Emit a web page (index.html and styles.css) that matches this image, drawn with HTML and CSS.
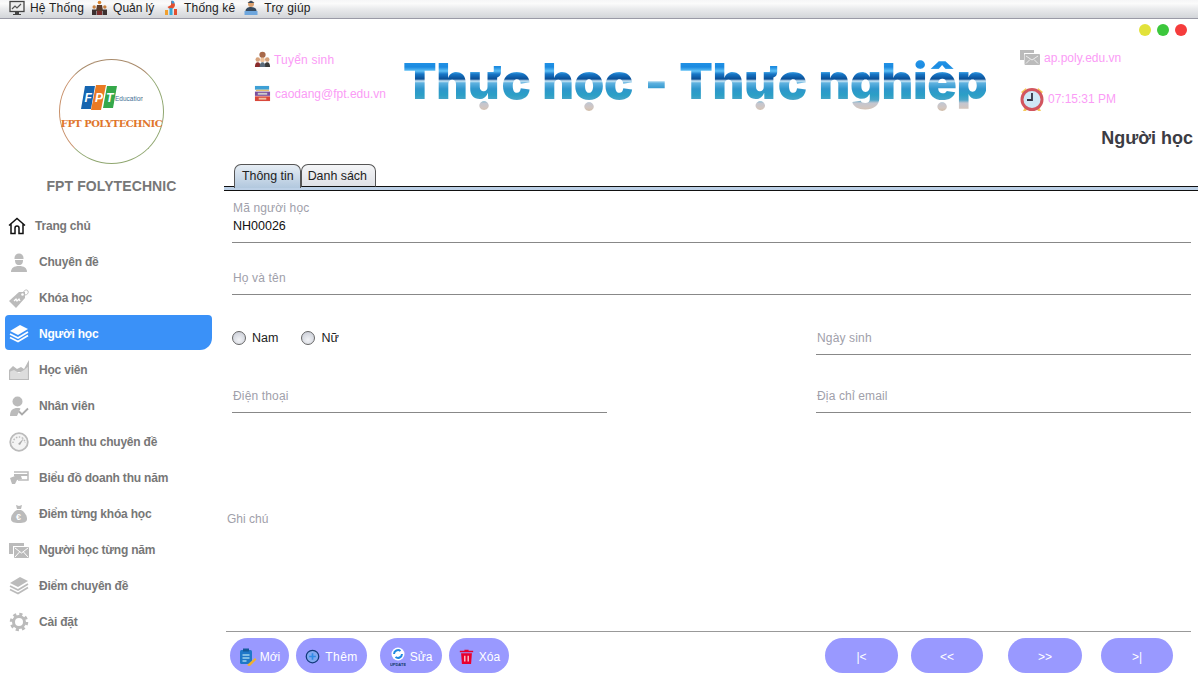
FILE: index.html
```html
<!DOCTYPE html>
<html lang="vi">
<head>
<meta charset="utf-8">
<title>Người học</title>
<link rel="stylesheet" href="styles.css">
</head>
<body>
<header class="menubar">
  <span class="menu-item menu-first">
    <svg class="mi" viewBox="0 0 16 16"><rect x="1" y="1.500" width="14" height="10" fill="#eee" stroke="#444" stroke-width="1.300"/><path d="M3 9l3-3 2 2 4-4" fill="none" stroke="#555" stroke-width="1.200"/><path d="M6 12h4v2h2v1H4v-1h2z" fill="#444"/></svg>
    Hệ Thống</span>
  <span class="menu-item menu-narrow">
    <svg class="mi mi-wide" viewBox="0 0 17 16"><circle cx="8.500" cy="2.500" r="1.800" fill="#d9822b"/><path d="M6 5h5l1 6H5z" fill="#5a3a2a"/><circle cx="3.200" cy="7" r="1.700" fill="#c9803f"/><path d="M1 9.500h4.500V15H1z" fill="#3c3030"/><circle cx="13.800" cy="7" r="1.700" fill="#c9803f"/><path d="M11.500 9.500H16V15h-4.500z" fill="#3c3030"/><path d="M6 11h5v4H6z" fill="#7a2b2b"/></svg>
    Quản lý</span>
  <span class="menu-item menu-third">
    <svg class="mi" viewBox="0 0 16 16"><path d="M8 1a4 4 0 1 1-3.500 6L8 5z" fill="#e2502f"/><path d="M8.500 0.500a3 3 0 0 1 3 3h-3z" fill="#3d9bd9"/><rect x="2" y="10" width="3" height="5" fill="#f0a030"/><rect x="6.500" y="8" width="3" height="7" fill="#38a9d6"/><rect x="11" y="9" width="3" height="6" fill="#e2502f"/></svg>
    Thống kê</span>
  <span class="menu-item">
    <svg class="mi" viewBox="0 0 16 16"><circle cx="8" cy="4" r="3" fill="#d9a06f"/><path d="M4.500 3l3.500-2.500L11.500 3z" fill="#34495e"/><path d="M2.500 11c0-2.500 2.500-4 5.500-4s5.500 1.500 5.500 4z" fill="#34495e"/><rect x="1.500" y="11" width="13" height="4" fill="#6ea6dd"/></svg>
    Trợ giúp</span>
</header>

<div class="window">
  <div class="dots" aria-hidden="true"><i class="dot dot-y"></i><i class="dot dot-g"></i><i class="dot dot-r"></i></div>

  <aside class="sidebar">
    <div class="logo">
      <svg class="fpt" viewBox="0 0 62 25">
        <path d="M4 1h10l-4 23H0z" fill="#1565b0"/><path d="M15 0h10l-5 25H10z" fill="#ea7a23"/><path d="M26 1h10l-4 22H22z" fill="#35a84a"/>
        <text x="3.500" y="17" class="fpt-l">F</text><text x="14" y="17" class="fpt-l">P</text><text x="25" y="17" class="fpt-l">T</text>
        <text x="34" y="16" class="fpt-e">Education</text>
      </svg>
      <span class="logo-text">FPT POLYTECHNIC</span>
    </div>
    <div class="brand">FPT FOLYTECHNIC</div>
    <nav class="nav">
      <a class="nav-item nav-home"><svg class="home" viewBox="0 0 18 18"><path d="M1 8.500L9 1.500l8 7M3 7v9.500h4V11a2 2 0 0 1 4 0v5.500h4V7" fill="none" stroke="#111" stroke-width="1.500"/></svg>Trang chủ</a>
      <a class="nav-item"><svg class="ni" viewBox="0 0 20 20"><path d="M5.500 6a4.500 4.500 0 0 1 9 0v1h-9z" fill="#bbb"/><path d="M6 8h8c0 3-1 5-4 5s-4-2-4-5z" fill="#bbb"/><path d="M2 20c0-4 3-6 8-6s8 2 8 6z" fill="#bbb"/></svg>Chuyên đề</a>
      <a class="nav-item"><svg class="ni" viewBox="0 0 20 20"><path d="M0 13L10 4h6v6L7 20z" fill="#bbb"/><circle cx="13.500" cy="6.500" r="1.300" fill="#fff"/><path d="M14 5c1-3 4-4 5-2s-1 4-3 4" fill="none" stroke="#bbb"/><path d="M5 13l2-2 1 2 2-2 1 2" fill="none" stroke="#fff" stroke-width="1.200"/></svg>Khóa học</a>
      <a class="nav-item nav-active"><svg class="ni" viewBox="0 0 20 20"><path d="M1 7l10-6 8 4-10 6z" fill="#fff"/><path d="M1 10l8 4 10-6M1 13.500l8 4 10-6" fill="none" stroke="#fff" stroke-width="1.800"/></svg>Người học</a>
      <a class="nav-item"><svg class="ni" viewBox="0 0 20 20"><path d="M0 10L4 6l4 3 4-2 3 2 5-9v12H0z" fill="#bbb"/><path d="M0 12l5-2 5 3 5-3 5-4v13H0z" fill="#ddd"/><path d="M0 19.500h20M.5 10v9M19.500 2v17" stroke="#bbb" stroke-width="1.200"/></svg>Học viên</a>
      <a class="nav-item"><svg class="ni" viewBox="0 0 20 20"><circle cx="8.500" cy="5.500" r="5" fill="#bbb"/><path d="M1 20c0-6 3-8 7.500-8 1 0 2 .1 3 .5L8 20z" fill="#bbb"/><path d="M10 15.500l3 3 6-6" fill="none" stroke="#aaa" stroke-width="1.800"/></svg>Nhân viên</a>
      <a class="nav-item"><svg class="ni" viewBox="0 0 20 20"><circle cx="10" cy="10" r="8.800" fill="#f4f4f4" stroke="#bbb" stroke-width="1.800"/><path d="M4 11a6 6 0 0 1 12 0" fill="none" stroke="#bbb" stroke-dasharray="1.500 1.500" stroke-width="1.500"/><path d="M9 12l6-6-4 7z" fill="#aaa"/></svg>Doanh thu chuyên đề</a>
      <a class="nav-item"><svg class="ni" viewBox="0 0 20 20"><path d="M5 4h14v8H9" fill="none" stroke="#bbb" stroke-width="1.500"/><path d="M5 7h14" stroke="#bbb" stroke-width="2"/><path d="M1 10l5-2h6l1 3-5 1-2 4H3z" fill="#bbb"/></svg>Biểu đồ doanh thu năm</a>
      <a class="nav-item"><svg class="ni" viewBox="0 0 20 20"><path d="M7 1l3 1 3-1-1 4H8z" fill="#bbb"/><path d="M8 6h4c4 2 6 6 6 9 0 3-3 4-8 4s-8-1-8-4c0-3 2-7 6-9z" fill="#bbb"/><text x="7" y="16" class="euro">€</text></svg>Điểm từng khóa học</a>
      <a class="nav-item"><svg class="ni" viewBox="0 0 20 20"><path d="M0 3h15v3H4v8H0z" fill="#bbb"/><rect x="5" y="7" width="15" height="11" rx="1" fill="#bbb"/><path d="M6 8l6.500 5L19 8M6 17l4.500-5M19 17l-4.500-5" fill="none" stroke="#fff"/></svg>Người học từng năm</a>
      <a class="nav-item"><svg class="ni" viewBox="0 0 20 20"><path d="M1 7l10-6 8 4-10 6z" fill="#bbb"/><path d="M1 10l8 4 10-6M1 13.500l8 4 10-6" fill="none" stroke="#bbb" stroke-width="1.800"/></svg>Điểm chuyên đề</a>
      <a class="nav-item"><svg class="ni" viewBox="0 0 20 20"><circle cx="10" cy="10" r="5.500" fill="none" stroke="#bbb" stroke-width="3"/><circle cx="10" cy="10" r="7.500" fill="none" stroke="#bbb" stroke-width="3.500" stroke-dasharray="3 2.900"/></svg>Cài đặt</a>
    </nav>
  </aside>

  <main class="main">
    <section class="banner">
      <div class="links links-left">
        <span class="link link-tight"><svg class="li" viewBox="0 0 18 18"><circle cx="9" cy="4" r="3.300" fill="#a8694a"/><circle cx="4" cy="9" r="2.400" fill="#d6a27c"/><circle cx="14" cy="9" r="2.400" fill="#d6a27c"/><circle cx="9" cy="9.500" r="2.500" fill="#eec39c"/><path d="M1 17c0-3 1-5 3-5s3 2 3 5z" fill="#8a2b2b"/><path d="M11 17c0-3 1-5 3-5s3 2 3 5z" fill="#3a3a3a"/><path d="M6 17c0-3 1-5 3-5s3 2 3 5z" fill="#5b6b7b"/></svg>Tuyển sinh</span>
        <span class="link"><svg class="li" viewBox="0 0 18 18"><rect x="1" y="1" width="15" height="4" fill="#3da0d6"/><rect x="2" y="5" width="14" height="1.500" fill="#e8c070"/><rect x="1" y="7" width="16" height="4.500" fill="#7a4f9d"/><rect x="4" y="8.300" width="10" height="2" fill="#ccc"/><rect x="1" y="12" width="16" height="5" fill="#d9483b"/><rect x="5" y="13.500" width="8" height="2" fill="#f0c0a0"/></svg>caodang@fpt.edu.vn</span>
      </div>
      <div class="slogan">Thực học - Thực nghiệp</div>
      <div class="links links-right">
        <span class="link"><svg class="li li-mail" viewBox="0 0 20 17"><path d="M0 1h14v3H4v7H0z" fill="#bbb"/><rect x="4.500" y="5" width="15.500" height="11" rx="1" fill="#bbb"/><path d="M6 7l6 4 6-4M6 14.500l4-4M18 14.500l-4-4" fill="none" stroke="#eee"/></svg>ap.poly.edu.vn</span>
        <span class="link link-clock"><svg class="li li-clock" viewBox="0 0 24 24"><path d="M1 5l5-4 1 3-4 3zM23 5l-5-4-1 3 4 3zM5 20l-2 4h3l2-3zM19 20l2 4h-3l-2-3z" fill="#f5c95a"/><circle cx="12" cy="12.500" r="10" fill="#cfe8f7" stroke="#d2555f" stroke-width="3"/><path d="M12 6v7H7" fill="none" stroke="#334" stroke-width="1.800"/></svg>07:15:31 PM</span>
      </div>
    </section>
    <h1 class="title">Người học</h1>

    <div class="tabs">
      <span class="tab tab-on">Thông tin</span>
      <span class="tab">Danh sách</span>
    </div>

    <form class="form">
      <div class="field field-first span-3"><span class="f-label">Mã người học</span><span class="f-value">NH00026</span></div>
      <div class="field span-3"><span class="f-label">Họ và tên</span></div>
      <div class="radios"><label class="radio"><i class="rb"></i>Nam</label><label class="radio"><i class="rb"></i>Nữ</label></div>
      <div class="field col-3"><span class="f-label">Ngày sinh</span></div>
      <div class="field col-1"><span class="f-label">Điện thoại</span></div>
      <div class="field col-3"><span class="f-label">Địa chỉ email</span></div>
    </form>

    <div class="notes"><span class="f-label">Ghi chú</span></div>

    <footer class="actions">
      <button type="button" class="btn b-moi"><svg class="bi" viewBox="0 0 18 18"><rect x="1" y="2" width="12" height="14" rx="1.500" fill="#1f78c8"/><rect x="4" y="0.500" width="6" height="3" fill="#145a99"/><path d="M3.500 7h7M3.500 10h7M3.500 13h4" stroke="#dff" stroke-width="1.200"/><path d="M8 17l8-7 1.500 1.500-7 7z" fill="#f0b030"/></svg>Mới</button>
      <button type="button" class="btn b-them"><svg class="bi bi-15" viewBox="0 0 18 18"><circle cx="9" cy="9" r="7.500" fill="#7fa8f0" stroke="#123a7a" stroke-width="1.500"/><path d="M5 9h8M9 5v8" stroke="#2f8be8" stroke-width="2"/></svg>Thêm</button>
      <button type="button" class="btn b-sua"><svg class="bi bi-up" viewBox="0 0 16 20"><circle cx="8" cy="7" r="6.500" fill="#fff"/><path d="M4 7a4 4 0 0 1 6.500-3M12 7a4 4 0 0 1-6.500 3" fill="none" stroke="#2089e0" stroke-width="2"/><text x="8" y="18.500" class="up-t">UPDATE</text></svg>Sửa</button>
      <button type="button" class="btn b-xoa"><svg class="bi bi-15" viewBox="0 0 18 18"><path d="M6.500 2V.8h5V2H17v2H1V2z" fill="#e8002d"/><path d="M2.500 5h13l-1 13h-11z" fill="#e8002d"/><path d="M7 8v7M11 8v7" stroke="#fff" stroke-width="1.300"/></svg>Xóa</button>
      <button type="button" class="btn b-first">|&lt;</button>
      <button type="button" class="btn b-prev">&lt;&lt;</button>
      <button type="button" class="btn b-next">&gt;&gt;</button>
      <button type="button" class="btn b-last">&gt;|</button>
    </footer>
  </main>
</div>
</body>
</html>
```
FILE: styles.css
```css
* { box-sizing: border-box; }
html, body { margin: 0; height: 100%; }
body {
  width: 1198px; height: 696px; overflow: hidden;
  font-family: "Liberation Sans", Arial, sans-serif;
  font-size: 12px; background: #fff; color: #111;
  display: flex; flex-direction: column;
}
svg { display: block; flex: none; }

.menubar {
  height: 19px; flex: none;
  display: flex; align-items: center; gap: 9px;
  padding: 0 0 2px 9px;
  background: linear-gradient(#f6f6f7, #fbfbfb 20%, #e9eaec 50%, #d3d5d9);
  border-bottom: 1px solid #9a9aa6;
  font-size: 12px; color: #222;
}
.menu-item { display: flex; align-items: center; gap: 5px; letter-spacing: .2px; }
.menu-first { margin-right: -2px; }
.menu-narrow { letter-spacing: -.05px; }
.menu-third { margin-right: -1px; letter-spacing: .15px; }
.mi { width: 16px; height: 16px; }
.mi-wide { width: 17px; }

.window {
  position: relative; flex: 1; display: flex;
  background: #fff; border-radius: 6px 6px 0 0;
}
.dots { position: absolute; top: 5px; right: 11px; display: flex; gap: 6px; }
.dot { width: 12px; height: 12px; border-radius: 50%; }
.dot-y { background: #e2e23a; }
.dot-g { background: #3cc73c; }
.dot-r { background: #f53c3c; }

.sidebar { width: 224px; flex: none; display: flex; flex-direction: column; align-items: flex-start; }
.logo {
  width: 105px; height: 105px; margin: 40px 0 0 59px; flex: none;
  border-radius: 50%; border: 1px solid #8fa66f;
  border-left-color: #c8906a; border-top-color: #a88a6a;
  display: flex; flex-direction: column; align-items: center;
}
.fpt { width: 62px; height: 25px; margin-top: 25px; }
.fpt-l { font: italic bold 12px "Liberation Sans", sans-serif; fill: #fff; }
.fpt-e { font: 6.500px "Liberation Sans", sans-serif; fill: #3f6f95; }
.logo-text {
  margin-top: 8px; white-space: nowrap;
  font: bold 10px "DejaVu Serif", serif; letter-spacing: -.55px; color: #e0762c;
}
.brand {
  width: 207px; margin: 14px 0 0 8px; height: 16px; line-height: 16px; flex: none;
  text-align: center; font-size: 14px; font-weight: bold; color: #777; letter-spacing: .1px;
}
.nav { margin: 13px 0 0 5px; width: 207px; display: flex; flex-direction: column; }
.nav-item {
  height: 36px; display: flex; align-items: center; gap: 10px; padding: 2px 0 0 4px;
  font-size: 12px; font-weight: bold; color: #777; letter-spacing: -.2px;
}
.nav-home { gap: 9px; padding-left: 3px; }
.home { width: 18px; height: 18px; }
.ni { width: 20px; height: 20px; }
.nav-active {
  height: 35px; margin-bottom: 1px; background: #3a91f8; color: #fff;
  border-radius: 4px 4px 12px 4px;
}
.euro { font: bold 9px "Liberation Sans", sans-serif; fill: #fff; }

.main { flex: 1; min-width: 0; display: flex; flex-direction: column; }
.banner { height: 106px; flex: none; display: flex; padding-left: 30px; }
.links { display: flex; flex-direction: column; flex: none; }
.links-left { width: 151px; padding-top: 32px; gap: 17px; }
.links-right { margin-left: 34px; padding-top: 30px; gap: 21px; }
.link { height: 17px; display: flex; align-items: center; gap: 4px; color: #fb9cf6; font-size: 12px; white-space: nowrap; }
.link-tight { gap: 3px; letter-spacing: .2px; margin-left: 0; }
.li { width: 17px; height: 17px; }
.li-mail { width: 20px; }
.li-clock { width: 24px; height: 24px; }
.link-clock { gap: 4px; height: 24px; }
.slogan {
  width: 583px; flex: none; height: 66px; margin: 35px 0 0 -2px;
  font: 900 49px/56px Inter, "Liberation Sans", sans-serif; letter-spacing: -.3px; word-spacing: 2px;
  white-space: nowrap; color: transparent;
  background: linear-gradient(#2aa0f0 0, #1b8ae0 13px, #5fc0f5 17px, #1878c8 20px, #0a4f96 25px, #cfe8f5 27px, #5fb2e0 29px, #2f96cc 35px, #2b9fc6 41px, #4aa5c8 46px, #c3c6d0 49px, #d2c6c0 54px, #cdb08a 60px);
  -webkit-background-clip: text; background-clip: text;
}
.title {
  margin: 0; height: 26px; flex: none; padding-right: 5px; text-align: right;
  font-size: 18px; line-height: 26px; font-weight: bold; color: #3c3c44;
}
.tabs {
  margin-top: 13px; height: 27px; flex: none; padding-left: 10px;
  display: flex; align-items: flex-start; gap: 0;
  border-bottom: 1px solid #111;
  background: linear-gradient(#111, #111) 0 22px / 100% 1px no-repeat, linear-gradient(#bcd0e6, #bcd0e6) 0 23px / 100% 3px no-repeat;
}
.tab {
  height: 23px; padding: 0 8px 0 6px; line-height: 23px; white-space: nowrap;
  border: 1px solid #555; border-bottom: 1px solid #111; border-radius: 7px 7px 0 0;
  background: linear-gradient(#f4f5f7, #dfe1e6); color: #222; font-size: 12.400px;
}
.tab-on {
  height: 24px; border-bottom: 0; padding: 0 6px 0 7px;
  background: linear-gradient(#e6edf4, #b2c8de); position: relative; z-index: 1;
}

.form {
  flex: none; padding: 0 7px 0 8px;
  display: grid; grid-template-columns: 375px 1fr 375px;
  grid-template-rows: 52px 52px 60px 58px;
}
.field { align-self: end; border-bottom: 1px solid #888; display: flex; flex-direction: column; height: 36px; justify-content: center; padding: 2px 0 0 1px; }
.field .f-label { letter-spacing: .15px; }
.field-first { height: 48px; justify-content: flex-start; padding-top: 6px; }
.span-3 { grid-column: 1 / -1; }
.col-1 { grid-column: 1; }
.col-3 { grid-column: 3; }
.f-label { color: #a0a0aa; font-size: 12px; line-height: 14px; }
.f-value { color: #111; font-size: 12.500px; line-height: 16px; margin-top: 3px; }
.radios { grid-column: 1; display: flex; gap: 23px; align-self: end; height: 36px; align-items: center; padding-top: 2px; }
.radio { display: flex; align-items: center; gap: 6px; color: #222; font-size: 12.500px; }
.rb {
  width: 14px; height: 14px; border-radius: 50%; border: 1px solid #666;
  background: radial-gradient(circle at 50% 65%, #f2f3f6, #c4c8d2);
}
.notes {
  flex: 1; margin: 0 7px 0 2px; padding: 99px 0 0 1px;
  border-bottom: 1px solid #999;
}
.actions { height: 64px; flex: none; display: flex; align-items: flex-start; padding: 6px 0 0 6px; }
.btn {
  height: 35px; padding: 2px 0 0; border: 0; border-radius: 18px; background: #9999ff;
  color: #fff; font: 12px "Liberation Sans", sans-serif;
  display: flex; align-items: center; justify-content: center; gap: 3px;
}
.bi { width: 18px; height: 18px; }
.bi-15 { width: 15px; height: 15px; }
.bi-up { width: 16px; height: 20px; }
.up-t { font: bold 4px "Liberation Sans", sans-serif; fill: #123a6a; text-anchor: middle; }
.b-moi { width: 59px; }
.b-them { width: 71px; margin-left: 7px; gap: 5px; letter-spacing: .4px; }
.b-sua { width: 62px; margin-left: 13px; gap: 4px; }
.b-xoa { width: 60px; margin-left: 7px; gap: 5px; padding-left: 1px; }
.b-first { width: 73px; margin-left: 316px; }
.b-prev { width: 72px; margin-left: 13px; }
.b-next { width: 74px; margin-left: 25px; }
.b-last { width: 72px; margin-left: 19px; }
```
